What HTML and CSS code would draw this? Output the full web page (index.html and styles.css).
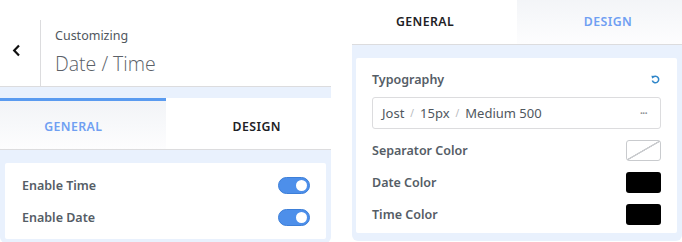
FILE: index.html
```html
<!DOCTYPE html>
<html lang="en">
<head>
  <meta charset="UTF-8">
  <title>Date / Time</title>
  <link rel="stylesheet" href="styles.css">
</head>
<body>
  <div class="panel panel-left">
    <div class="head">
      <span class="back">
        <svg width="9" height="13" viewBox="0 0 9 13"><path d="M7 1.5 L2.2 6.5 L7 11.5" fill="none" stroke="#111" stroke-width="2.2"/></svg>
      </span>
      <div class="title">
        <div class="sub">Customizing</div>
        <div class="name">Date / Time</div>
      </div>
    </div>
    <div class="gap"></div>
    <div class="tabs">
      <div class="tab tab-general on top">GENERAL</div>
      <div class="tab tab-design">DESIGN</div>
    </div>
    <div class="body">
      <div class="card">
        <div class="row">
          <span class="label">Enable Time</span>
          <span class="toggle"><i></i></span>
        </div>
        <div class="row">
          <span class="label">Enable Date</span>
          <span class="toggle"><i></i></span>
        </div>
      </div>
    </div>
  </div>

  <div class="panel panel-right">
    <div class="tabs">
      <div class="tab tab-general">GENERAL</div>
      <div class="tab tab-design on">DESIGN</div>
    </div>
    <div class="body">
      <div class="card card-design">
        <div class="row row-typo">
          <span class="label">Typography</span>
          <svg class="reset" width="9" height="9" viewBox="0 0 10 10"><path d="M2.2 2.6 A3.6 3.6 0 1 1 1.5 6" fill="none" stroke="#2f86c9" stroke-width="1.7"/><path d="M0.4 0.8 L4.2 1.2 L1.4 4.2 Z" fill="#2f86c9"/></svg>
        </div>
        <div class="font-box">
          <span>Jost</span><em>/</em><span>15px</span><em>/</em><span>Medium 500</span>
          <b class="more">···</b>
        </div>
        <div class="row">
          <span class="label">Separator Color</span>
          <span class="swatch none"></span>
        </div>
        <div class="row">
          <span class="label">Date Color</span>
          <span class="swatch"></span>
        </div>
        <div class="row">
          <span class="label">Time Color</span>
          <span class="swatch"></span>
        </div>
      </div>
    </div>
  </div>
</body>
</html>
```

FILE: styles.css
```css
* {
  padding: 0;
  margin: 0;
  box-sizing: border-box;
}

body {
  display: flex;
  align-items: flex-start;
  gap: 21px;
  width: 682px;
  height: 242px;
  overflow: hidden;
  background: #fff;
  font-family: "Noto Sans", "Open Sans", sans-serif;
  color: #555d66;
}

.panel {
  display: flex;
  flex-direction: column;
}

.panel-left {
  width: 331px;
}

.panel-right {
  width: 330px;
  margin-top: -7px;
}

/* header */
.head {
  display: flex;
  height: 87px;
  padding-top: 20px;
  border-bottom: 1px solid #dcdcde;
}

.back {
  display: flex;
  align-items: center;
  justify-content: center;
  width: 41px;
  padding-bottom: 6px;
  padding-right: 8px;
  border-right: 1px solid #dcdcde;
}

.title {
  padding: 7px 0 0 14px;
}

.sub {
  font-size: 12.5px;
  line-height: 18px;
  color: #50575e;
}

.name {
  margin-top: 6px;
  font-family: "Open Sans", sans-serif;
  font-weight: 300;
  font-size: 19.5px;
  line-height: 26px;
  color: #5b6168;
}

.gap {
  height: 11px;
  background: #e9f1fd;
}

/* tabs */
.tabs {
  display: flex;
  border-bottom: 1px solid #dcdcde;
}

.tab {
  width: 50%;
  flex: none;
  height: 51px;
  padding-top: 3px;
  display: flex;
  align-items: center;
  justify-content: center;
  font-size: 12.3px;
  font-weight: 600;
  letter-spacing: 0.4px;
  color: #1e2125;
  background: #fff;
  border-top: 3px solid transparent;
}

.tab-general {
  padding-right: 19px;
}

.tab-design {
  padding-left: 17px;
}

.tab.on {
  color: #6f9ff2;
  background: linear-gradient(to bottom, #f2f4f7, #fdfdfe);
}

.tab.on.top {
  border-top-color: #5a9bf0;
}

/* body */
.body {
  background: #e9f1fd;
  padding: 13px 5px 4px;
  border-radius: 0 0 6px 6px;
}

.panel-right .body {
  padding: 13px 5px 8px 4px;
}

.card {
  background: #fff;
  border-radius: 2px;
  padding: 6px 16px 6px 17px;
}

.row {
  display: flex;
  align-items: center;
  justify-content: space-between;
  height: 32px;
}

.label {
  font-size: 12.5px;
  font-weight: 600;
  color: #555d66;
}

.toggle {
  position: relative;
  width: 32px;
  height: 17px;
  border-radius: 9px;
  background: #4d8fea;
  border: 1px solid #3d7fd8;
}

.toggle i {
  position: absolute;
  top: 2px;
  right: 2px;
  width: 11px;
  height: 11px;
  border-radius: 50%;
  background: #fff;
}

/* design card */
.card-design {
  padding: 11px 16px 3px;
}

.row-typo {
  height: 20px;
}

.reset {
  margin-right: 1px;
}

.font-box {
  display: flex;
  align-items: center;
  height: 32px;
  margin: 8px 0 5px;
  padding: 0 9px;
  border: 1px solid #dcdcde;
  border-radius: 3px;
  font-size: 13px;
  color: #50575e;
}

.font-box em {
  font-style: normal;
  font-size: 10px;
  color: #b5b8bc;
  margin: 0 6px;
}

.font-box .more {
  margin-left: auto;
  font-size: 10px;
  font-weight: 700;
  color: #8c8f94;
  letter-spacing: -0.5px;
  padding-right: 4px;
}

.swatch {
  width: 35px;
  height: 21px;
  border-radius: 3px;
  background: #000;
}

.swatch.none {
  background: linear-gradient(to bottom right, #fff calc(50% - 1px), #c9cbce calc(50% - 0.5px), #c9cbce calc(50% + 0.5px), #fff calc(50% + 1px));
  border: 1px solid #c9cbce;
}
```
